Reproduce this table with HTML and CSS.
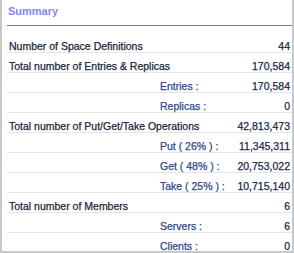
FILE: index.html
```html
<!DOCTYPE html>
<html>
<head>
<meta charset="utf-8">
<link rel="stylesheet" href="styles.css">
</head>
<body>
<div class="panel">
  <div class="header">Summary</div>
  <div class="rows">
    <div class="row"><span class="label">Number of Space Definitions</span><span class="value">44</span></div>
    <div class="row"><span class="label">Total number of Entries &amp; Replicas</span><span class="value">170,584</span></div>
    <div class="row sub"><span class="label">Entries :</span><span class="value">170,584</span></div>
    <div class="row sub"><span class="label">Replicas :</span><span class="value">0</span></div>
    <div class="row"><span class="label">Total number of Put/Get/Take Operations</span><span class="value">42,813,473</span></div>
    <div class="row sub"><span class="label">Put ( 26% ) :</span><span class="value">11,345,311</span></div>
    <div class="row sub"><span class="label">Get ( 48% ) :</span><span class="value">20,753,022</span></div>
    <div class="row sub"><span class="label">Take ( 25% ) :</span><span class="value">10,715,140</span></div>
    <div class="row"><span class="label">Total number of Members</span><span class="value">6</span></div>
    <div class="row sub"><span class="label">Servers :</span><span class="value">6</span></div>
    <div class="row sub last"><span class="label">Clients :</span><span class="value">0</span></div>
  </div>
</div>
</body>
</html>
```
FILE: styles.css
```css
html, body {
  margin: 0;
  padding: 0;
  background: #ffffff;
}

body {
  font-family: "Liberation Sans", Arial, sans-serif;
  font-size: 10.5px;
  width: 294px;
  height: 253px;
  overflow: hidden;
}

.panel {
  box-sizing: border-box;
  width: 294px;
  height: 253px;
  border-left: 2px solid #c8c8c8;
  border-right: 2px solid #c8c8c8;
  border-bottom: 2px solid #c8c8c8;
  padding: 0 0 0 5px;
}

.header {
  height: 20px;
  padding: 5px 0 0 1px;
  line-height: 13px;
  font-size: 11px;
  font-weight: bold;
  color: #8387ef;
  border-bottom: 1px solid #2196f3;
}

.rows {
  margin-top: 7px;
}

.row {
  box-sizing: border-box;
  height: 20px;
  padding: 7px 2px 0 2px;
  line-height: 13px;
  border-bottom: 1px solid #e6e6e6;
  display: flex;
  justify-content: space-between;
  color: #1a273b;
  -webkit-text-stroke: 0.25px currentColor;
}

.row.last {
  border-bottom: none;
}

.row.sub {
  padding-left: 153px;
}

.row.sub .label {
  color: #2c4a88;
}

.value {
  color: #1a2a44;
}
```
